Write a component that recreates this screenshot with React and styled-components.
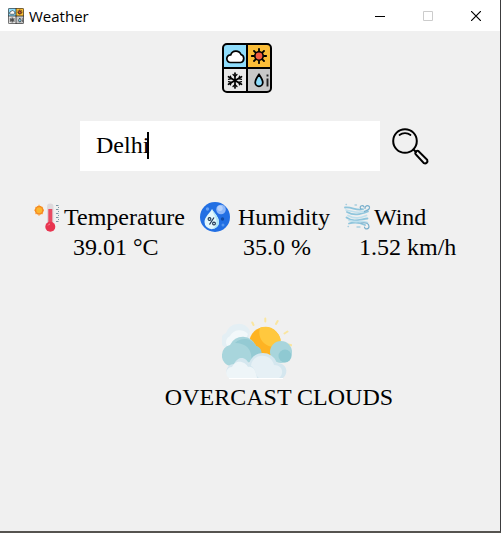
import React, { useState } from "react";
import styled, { createGlobalStyle } from "styled-components";

const GlobalStyle = createGlobalStyle`
  * { box-sizing: border-box; }
  body { margin: 0; background: #f0f0f0; }
`;

const Window = styled.div`
  display: flex;
  flex-direction: column;
  min-height: 100vh;
  background: #f0f0f0;
  border-right: 1px solid #3c3c3e;
  border-bottom: 2px solid #55534f;
  color: #000;
  font: 24px/30px "Liberation Serif", "Times New Roman", serif;
`;

const TitleBar = styled.header`
  display: flex;
  align-items: center;
  height: 31px;
  padding-left: 8px;
  gap: 5px;
  background: #fff;
`;

const Title = styled.h1`
  flex: 1;
  margin: 0;
  font: 400 15px/20px "Open Sans", "Noto Sans", sans-serif;
`;

const WindowControls = styled.div`
  display: flex;
`;

const ControlButton = styled.button`
  display: grid;
  place-items: center;
  width: 48px;
  height: 31px;
  padding: 0;
  border: 0;
  background: transparent;
  color: ${({ disabled }) => (disabled ? "#cccccc" : "#000")};
`;

const Main = styled.main`
  display: flex;
  flex-direction: column;
`;

const Brand = styled.div`
  display: flex;
  justify-content: center;
  padding: 12px 6px 28px 0;
`;

const SearchForm = styled.form`
  display: flex;
  gap: 5px;
  padding: 0 65px 0 80px;
`;

const Field = styled.div`
  position: relative;
  flex: 1;
  min-width: 0;
`;

const CityInput = styled.input`
  display: block;
  width: 100%;
  height: 50px;
  padding: 0 16px 2px;
  border: 0;
  outline: 0;
  background: #fff;
  color: #000;
  font: inherit;
  caret-color: transparent;
`;

const Caret = styled.span`
  position: absolute;
  left: 67px;
  top: 11px;
  width: 2px;
  height: 27px;
  background: #000;
`;

const SearchButton = styled.button`
  width: 50px;
  height: 50px;
  padding: 0;
  border: 0;
  background: transparent;
`;

const Readings = styled.dl`
  display: grid;
  grid-template-columns: 166px 144px 112px;
  justify-content: center;
  margin: 0;
  padding: 31px 10px 0 0;
`;

const Reading = styled.div`
  white-space: nowrap;
`;

const ReadingLabel = styled.dt`
  display: flex;
  align-items: center;
  gap: ${({ $gap }) => $gap}px;
`;

const ReadingValue = styled.dd`
  margin: 0;
  padding-left: ${({ $indent }) => $indent}px;
`;

const Conditions = styled.section`
  display: flex;
  flex-direction: column;
  align-items: center;
  padding-top: 50px;
`;

const ConditionPicture = styled.div`
  padding-left: 14px;
`;

const ConditionText = styled.p`
  margin: 0;
  padding-left: 58px;
`;

const Drawing = styled.svg`
  display: block;
  flex: none;
`;

function WeatherLogo({ size }) {
  return (
    <Drawing width={size} height={size} viewBox="0 0 50 50" aria-hidden="true">
      <rect x="1" y="1" width="48" height="48" rx="4" fill="#e9e9e9" />
      <path d="M5 1H25V25H1V5a4 4 0 0 1 4-4Z" fill="#8edcfb" />
      <path d="M25 1h20a4 4 0 0 1 4 4v20H25Z" fill="#fbbd38" />
      <path d="M25 25h24v20a4 4 0 0 1-4 4H25Z" fill="#c8c8c8" />
      <path d="M25 1v48M1 25h48" stroke="#000" strokeWidth="2" />
      <rect x="1" y="1" width="48" height="48" rx="4" fill="none" stroke="#000" strokeWidth="2" />
      <path d="M8.500 19.500a3.800 3.800 0 0 1 .2-7.600A5.500 5.500 0 0 1 19 11.500a4.200 4.200 0 0 1-.3 8Z" fill="#fff" stroke="#000" strokeWidth="1.700" />
      <circle cx="37" cy="13" r="4.200" fill="#f45b43" stroke="#000" strokeWidth="1.600" />
      <path d="M37 5.800v2M37 18.200v2M29.800 13h2M42.200 13h2M32 8l1.400 1.400M40.600 16.600l1.400 1.400M42 8l-1.400 1.400M33.400 16.600 32 18" stroke="#000" strokeWidth="1.800" strokeLinecap="round" />
      <path d="M13 30v15M6.500 33.700l13 7.600M19.500 33.700l-13 7.600" stroke="#000" strokeWidth="1.700" strokeLinecap="round" />
      <path d="m11 31.500 2 2 2-2M11 43.500l2-2 2 2M6.500 36.400l2.600-.7-.6-2.600M19.500 38.600l-2.600.7.6 2.600M6.500 38.600l2.600.7-.6 2.600M19.500 36.400l-2.600-.7.6-2.600" fill="none" stroke="#000" strokeWidth="1.200" strokeLinecap="round" />
      <path d="M37 31.500c-2 3-3.800 5.400-3.800 8a3.800 3.800 0 0 0 7.600 0c0-2.600-1.800-5-3.800-8Z" fill="#8edcfb" stroke="#000" strokeWidth="1.800" />
      <path d="M45.500 35.500v8M45.500 31.500v2" stroke="#222" strokeWidth="1.900" />
    </Drawing>
  );
}

function Magnifier() {
  return (
    <Drawing width="50" height="50" viewBox="0 0 50 50" fill="none" stroke="#000" strokeWidth="2" strokeLinecap="round" aria-hidden="true">
      <circle cx="20" cy="20" r="11.800" />
      <path d="M14.500 14c3-2.500 8-2.500 11 0" strokeWidth="1.700" />
      <path d="m28.500 28.500 2.500 2.500" />
      <path d="M30.600 33.200a2 2 0 0 1 0-2.200l.8-.8a2 2 0 0 1 2.200 0l8.600 8.700a2.500 2.500 0 0 1-3.300 3.300Z" />
    </Drawing>
  );
}

function Thermometer() {
  return (
    <Drawing width="30" height="30" viewBox="0 0 30 30" aria-hidden="true">
      <path d="M5 2.800v1M5 12.800v1M.3 8.300h1M9 8.300h1M1.500 5l.7.700M8 11.300l.7.700M8.700 5l-.7.700M2.200 11.300l-.7.700" stroke="#ffb45a" strokeWidth="1.500" />
      <circle cx="5.200" cy="8.300" r="3.700" fill="#fcb62e" stroke="#f58a22" strokeWidth="1.500" />
      <rect x="13" y="1.500" width="6.500" height="23" rx="3.200" fill="#ddd9dc" />
      <rect x="14.300" y="7" width="4" height="18" fill="#e94a62" />
      <circle cx="16.300" cy="24.700" r="5" fill="#e83550" />
      <path d="M14 23.500a2.500 2.500 0 0 1 2-1.500" stroke="#f7899a" fill="none" />
      <path d="M22 3.500h2.500M22 7.500h2.500M22 11.500h2.500M22 15.500h2.500M22 19.500h2.500M24 5.500h1M24 9.500h1M24 13.500h1M24 17.500h1" stroke="#7895a2" />
    </Drawing>
  );
}

function HumidityDrop() {
  return (
    <Drawing width="30" height="30" viewBox="0 0 30 30" aria-hidden="true">
      <circle cx="15" cy="15" r="15" fill="#226fe3" />
      <circle cx="21" cy="7.500" r="4.800" fill="#8fb8f8" />
      <circle cx="20" cy="6.300" r="2.700" fill="#b6d1fc" />
      <circle cx="7.500" cy="7" r="1.700" fill="#66a1f3" />
      <circle cx="22.500" cy="17" r="1.700" fill="#114aa5" />
      <circle cx="23" cy="23" r="1.500" fill="#5797ee" />
      <path d="M12 7C9.500 11.500 4.500 15 4.500 20a7.200 7.200 0 0 0 14.500 0C19 15 14.500 11.500 12 7Z" fill="#e2f7fc" />
      <path d="M12 7c1 5 4.500 8 4.500 12.500 0 4-1.800 6.600-5 7.500 4.500 0 7.500-3 7.500-7 0-5-4.500-8.500-7-13Z" fill="#b2e6f5" />
      <path d="m14 15.500-4.500 7" stroke="#1c3351" strokeWidth="1.200" />
      <circle cx="9.500" cy="17" r="1.400" fill="none" stroke="#1c3351" strokeWidth="1.100" />
      <circle cx="14" cy="21.500" r="1.400" fill="none" stroke="#1c3351" strokeWidth="1.100" />
    </Drawing>
  );
}

function WindStreams() {
  return (
    <Drawing width="30" height="30" viewBox="0 0 30 30" fill="none" strokeLinecap="round" aria-hidden="true">
      <path d="M1 5.500c7-1 11 3.500 18 1.700M3 10c7 4 13 2.500 21-.5M2.500 15.500c7 5 13 2 21 1M5 21.500c6-2 11-1 16 1.500" stroke="#8fc5dc" strokeWidth="1.800" />
      <path d="M2 8c8 1.500 13 4.500 22.500-.5M4 13.500c7 4 12 2.500 18.500 0M5 18.500c7 2.500 11-.5 18.500 2" stroke="#bfe0ed" strokeWidth="1.700" />
      <path d="M17 7c-2.500-2.500 1.500-4.500 3-2.200M21 6.500c0-4 5-3.300 4.500-.6-.4 1.800-3 3-5 3.600M17 21c5-.8 8 .5 8 3.500 0 3-4.500 3-4.500.5" stroke="#78aecb" strokeWidth="1.200" />
      <path d="M11 3h1.500M2 2.500h.5M4 24.500h.5M13 25h3" stroke="#a9cfdf" strokeWidth="1.300" />
    </Drawing>
  );
}

function CloudySun() {
  return (
    <Drawing width="70" height="70" viewBox="0 0 70 70" aria-hidden="true">
      <path d="m31.500 13-1.200-2.500M43.300 9.500V6.500M54 12l1.700-3M62.500 21.500l3-2M66.500 32.500l3 .7" stroke="#fae6a0" strokeWidth="2" strokeLinecap="round" />
      <circle cx="43" cy="30.500" r="15.500" fill="#feb323" />
      <path d="M38 15.800c-3 10 4 21.200 20 19.200a15.500 15.500 0 0 0-20-19.200Z" fill="#ffc83e" />
      <path d="M4 36a8 8 0 0 1 0-15 13 13 0 0 1 24-2l-3 18Z" fill="#e4eff4" />
      <path d="M5 34a7 7 0 0 1 3-10 11 11 0 0 1 18-2l-6 14Z" fill="#f2f8fa" />
      <circle cx="59" cy="40" r="11" fill="#a8d5dc" />
      <circle cx="63" cy="44" r="6.500" fill="#8fc9d2" />
      <path d="M0 43a10 10 0 0 1 8-10 14 14 0 0 1 26 1 8 8 0 0 1 0 15l-24 5A10 10 0 0 1 0 43Z" fill="#a8d5dc" />
      <path d="M13 31a13 13 0 0 1 21 3c6 1 8 10 2 14l-7 2c2-10-3-19-16-19Z" fill="#94cad3" />
      <path d="M6 64c-4-7 1-12 6-12 5-10 13-6 15 0 3-14 23-15 28-1 10 0 12 10 6 15H9Z" fill="#d5e7ef" />
      <path d="M7 66a6 6 0 0 1 3-11c4-9 14-5 16 0 5-1 8 3 9 11Z" fill="#eef5f8" />
      <path d="M37 66c-5-4-3-10-8-12 1-13 20-14 23-1 8 0 11 8 5 13Z" fill="#e6f0f5" />
      <path d="M7 66.500h54" stroke="#fff" />
    </Drawing>
  );
}

const readings = [
  { label: "Temperature", value: "39.01 °C", icon: Thermometer, gap: 0, indent: 39 },
  { label: "Humidity", value: "35.0 %", icon: HumidityDrop, gap: 8, indent: 43 },
  { label: "Wind", value: "1.52 km/h", icon: WindStreams, gap: 0, indent: 15 },
];

export default function App() {
  const [city, setCity] = useState("Delhi");

  return (
    <Window>
      <GlobalStyle />
      <TitleBar>
        <WeatherLogo size={16} />
        <Title>Weather</Title>
        <WindowControls>
          <ControlButton type="button" aria-label="Minimize">
            <Drawing width="10" height="10" viewBox="0 0 10 10"><path d="M0 5.500h10" stroke="currentColor" /></Drawing>
          </ControlButton>
          <ControlButton type="button" aria-label="Maximize" disabled>
            <Drawing width="10" height="10" viewBox="0 0 10 10"><path d="M.5.500h9v9h-9Z" fill="none" stroke="currentColor" /></Drawing>
          </ControlButton>
          <ControlButton type="button" aria-label="Close">
            <Drawing width="10" height="10" viewBox="0 0 10 10"><path d="m0 0 10 10M10 0 0 10" stroke="currentColor" strokeWidth="1.200" /></Drawing>
          </ControlButton>
        </WindowControls>
      </TitleBar>
      <Main>
        <Brand><WeatherLogo size={50} /></Brand>
        <SearchForm onSubmit={(event) => event.preventDefault()}>
          <Field>
            <CityInput aria-label="City" value={city} onChange={(event) => setCity(event.target.value)} />
            {city === "Delhi" && <Caret />}
          </Field>
          <SearchButton type="submit" aria-label="Search"><Magnifier /></SearchButton>
        </SearchForm>
        <Readings>
          {readings.map(({ label, value, icon: Icon, gap, indent }) => (
            <Reading key={label}>
              <ReadingLabel $gap={gap}><Icon />{label}</ReadingLabel>
              <ReadingValue $indent={indent}>{value}</ReadingValue>
            </Reading>
          ))}
        </Readings>
        <Conditions>
          <ConditionPicture><CloudySun /></ConditionPicture>
          <ConditionText>OVERCAST CLOUDS</ConditionText>
        </Conditions>
      </Main>
    </Window>
  );
}
